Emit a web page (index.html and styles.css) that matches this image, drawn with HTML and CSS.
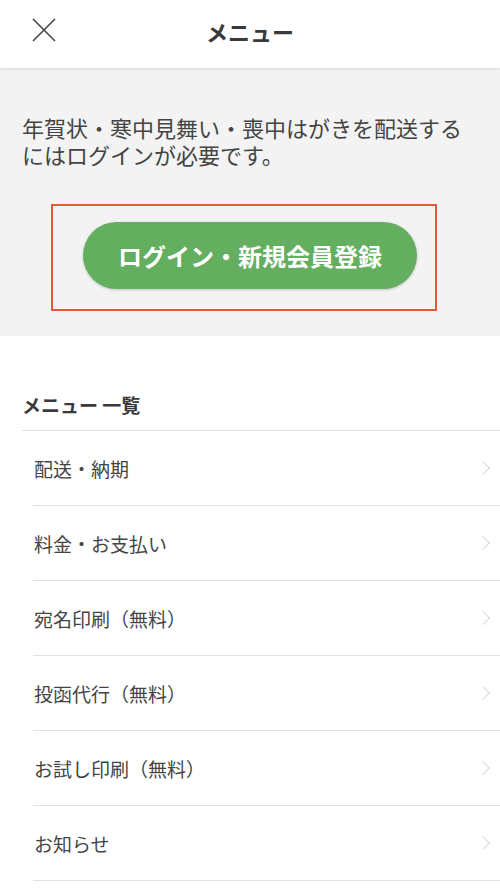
FILE: index.html
```html
<!DOCTYPE html>
<html lang="ja">
<head>
<meta charset="UTF-8">
<meta name="viewport" content="width=device-width, initial-scale=1.0">
<title>メニュー</title>
<link rel="stylesheet" href="styles.css">
</head>
<body>
    <header class="top-bar">
        <button class="close-btn" aria-label="閉じる">
            <svg width="24" height="24" viewBox="0 0 24 24">
                <path d="M1 1 L23 23 M23 1 L1 23" stroke="#474747" stroke-width="1.6" fill="none"/>
            </svg>
        </button>
        <h1 class="top-title">メニュー</h1>
    </header>

    <section class="login-area">
        <p class="login-note">年賀状・寒中見舞い・喪中はがきを配送するにはログインが必要です。</p>
        <div class="login-frame">
            <a href="#" class="login-btn">ログイン・新規会員登録</a>
        </div>
    </section>

    <section class="menu-list">
        <h2 class="menu-heading">メニュー 一覧</h2>
        <ul class="menu-items">
            <li><a href="#">配送・納期</a></li>
            <li><a href="#">料金・お支払い</a></li>
            <li><a href="#">宛名印刷（無料）</a></li>
            <li><a href="#">投函代行（無料）</a></li>
            <li><a href="#">お試し印刷（無料）</a></li>
            <li><a href="#">お知らせ</a></li>
        </ul>
    </section>
</body>
</html>
```

FILE: styles.css
```css
body {
    margin: 0;
    font-family: "Noto Sans CJK JP", "Noto Sans", sans-serif;
    color: #404040;
    background-color: #fff;
}
.top-bar {
    position: relative;
    z-index: 1;
    height: 68px;
    display: flex;
    align-items: center;
    justify-content: center;
    background-color: #fff;
    box-shadow: 0 1px 3px rgba(0, 0, 0, 0.12);
}
.close-btn {
    position: absolute;
    left: 32px;
    top: 18px;
    padding: 0;
    border: none;
    background: none;
    line-height: 0;
}
.top-title {
    margin: 0;
    font-size: 22px;
    font-weight: bold;
    color: #3a3a3a;
    line-height: 1;
    padding-bottom: 6px;
}
.login-area {
    background-color: #f3f3f3;
    padding: 46px 22px 25px;
}
.login-note {
    margin: 0;
    font-size: 22px;
    line-height: 27px;
    color: #444;
}
.login-frame {
    width: 382px;
    margin: 36px 0 0 29px;
    padding: 16px 0 20px;
    border: 2px solid #e35b36;
}
.login-btn {
    display: flex;
    align-items: center;
    justify-content: center;
    width: 334px;
    height: 67px;
    margin-left: 30px;
    border-radius: 34px;
    background-color: #63ae5f;
    box-shadow: 0 1px 3px rgba(0, 0, 0, 0.2);
    color: #fff;
    font-size: 24px;
    font-weight: bold;
    text-decoration: none;
}
.menu-list {
    padding: 57px 0 0 22px;
}
.menu-heading {
    margin: 0;
    padding-bottom: 13px;
    border-bottom: 1px solid #dedede;
    font-size: 19px;
    line-height: 24px;
    font-weight: bold;
    color: #3a3a3a;
}
.menu-items {
    list-style: none;
    margin: 0;
    padding: 0 0 0 11px;
}
.menu-items li {
    border-bottom: 1px solid #e0e0e0;
}
.menu-items a {
    display: flex;
    align-items: center;
    justify-content: space-between;
    height: 74px;
    padding: 0 12px 0 1px;
    font-size: 19px;
    color: #444;
    text-decoration: none;
}
.menu-items a::after {
    content: "";
    width: 9px;
    height: 9px;
    border-top: 1px solid #d8d8d8;
    border-right: 1px solid #d8d8d8;
    transform: rotate(45deg);
}
```
